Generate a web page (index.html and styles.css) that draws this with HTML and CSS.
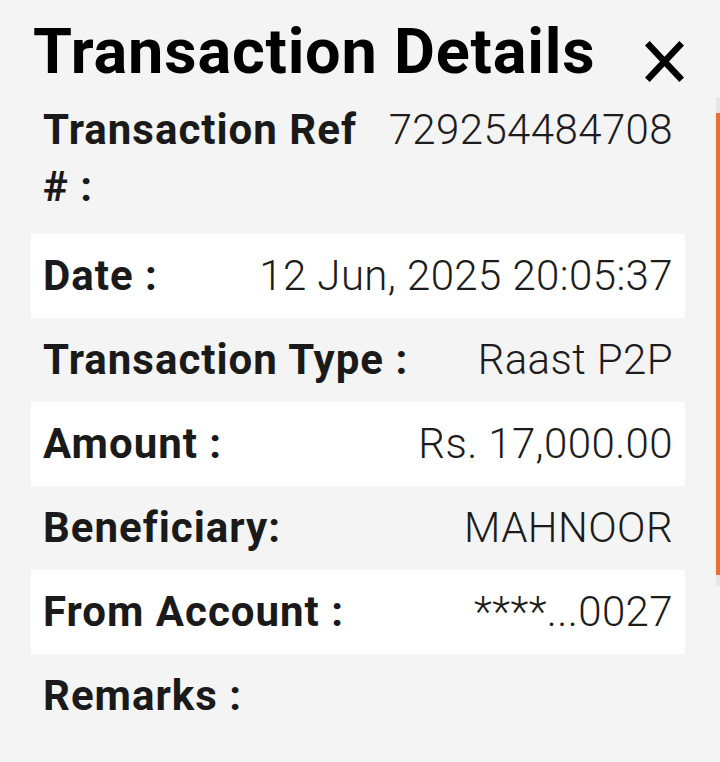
FILE: index.html
```html
<!DOCTYPE html>
<html>
<head>
<meta charset="utf-8">
<link rel="stylesheet" href="styles.css">
</head>
<body>
<div class="sheet">
  <header class="header">
    <h1 class="title">Transaction Details</h1>
    <button class="close" aria-label="Close">
      <svg class="close-icon" viewBox="0 0 39 41"><path d="M2.3 2.3L36.7 38.7M36.7 2.3L2.3 38.7"/></svg>
    </button>
  </header>
  <div class="details">
    <div class="row row-first"><span class="label">Transaction Ref # :</span><span class="value">729254484708</span></div>
    <div class="row alt"><span class="label">Date :</span><span class="value">12 Jun, 2025 20:05:37</span></div>
    <div class="row"><span class="label">Transaction Type :</span><span class="value">Raast P2P</span></div>
    <div class="row alt"><span class="label">Amount :</span><span class="value">Rs. 17,000.00</span></div>
    <div class="row"><span class="label">Beneficiary:</span><span class="value">MAHNOOR</span></div>
    <div class="row alt"><span class="label">From Account :</span><span class="value">****...0027</span></div>
    <div class="row"><span class="label">Remarks :</span><span class="value"></span></div>
  </div>
  <div class="scrollbar"><div class="scroll-thumb"></div></div>
</div>
</body>
</html>
```
FILE: styles.css
```css
html, body {
  margin: 0;
  padding: 0;
  background: #f4f4f4;
}
body {
  width: 720px;
  height: 762px;
  overflow: hidden;
  font-family: Roboto, "Liberation Sans", sans-serif;
}
.sheet {
  position: relative;
  height: 762px;
}
.header {
  display: flex;
  justify-content: space-between;
  align-items: flex-end;
  padding: 20px 36px 0 33px;
}
.title {
  margin: 0;
  font-size: 63px;
  line-height: 63px;
  font-weight: 700;
  letter-spacing: 0.8px;
  color: #000;
}
.close {
  border: 0;
  background: none;
  padding: 0;
  margin: 0 0 1px 0;
  width: 39px;
  height: 41px;
  display: flex;
}
.close-icon {
  width: 39px;
  height: 41px;
  fill: none;
  stroke: #000;
  stroke-width: 6.5;
  stroke-linecap: butt;
}
.details {
  margin: 4px 35px 0 31px;
  display: flex;
  flex-direction: column;
}
.row {
  display: flex;
  justify-content: space-between;
  gap: 18px;
  padding: 13.5px 12px;
  font-size: 42px;
  line-height: 57px;
}
.row-first {
  padding-bottom: 19px;
}
.alt {
  background: #ffffff;
}
.label {
  flex: 0 1 auto;
  font-weight: 700;
  letter-spacing: 1px;
  color: #1a1a1a;
}
.value {
  flex: none;
  white-space: nowrap;
  font-weight: 300;
  letter-spacing: 0.4px;
  color: #1c1c1c;
  text-align: right;
}
.scrollbar {
  position: absolute;
  right: 0;
  top: 97px;
  width: 4px;
  height: 489px;
  background: #e6e6e6;
}
.scroll-thumb {
  margin-top: 16px;
  height: 462px;
  background: #e96f32;
}
```
